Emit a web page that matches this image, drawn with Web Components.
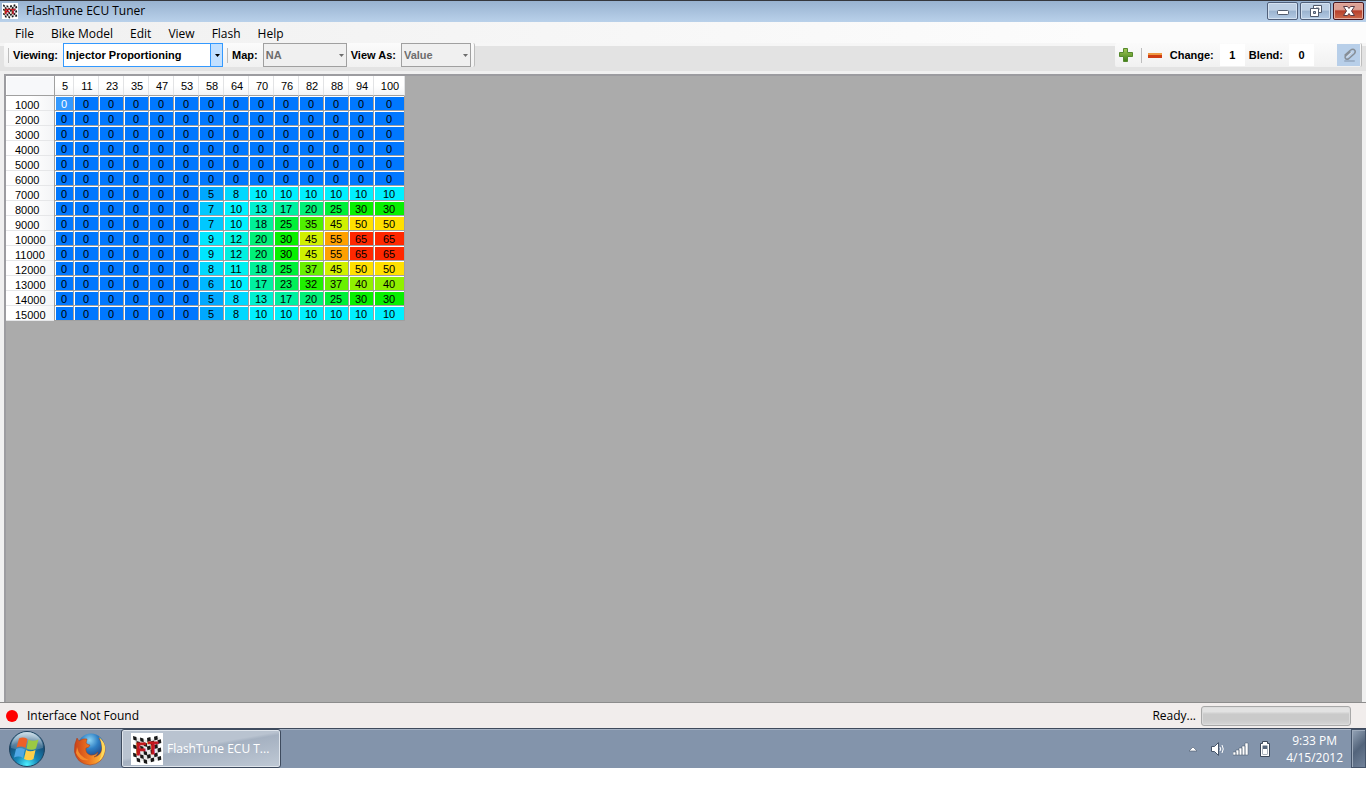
<!DOCTYPE html>
<html lang="en">
<head>
<meta charset="utf-8">
<title>FlashTune ECU Tuner</title>
<style>
  body {
    margin: 0;
    background: #fff;
    color: #000;
    font: 12px/16px "Open Sans", "Noto Sans", sans-serif;
  }
</style>
</head>
<body>
<tuner-desktop>
  <title-bar slot="window">FlashTune ECU Tuner</title-bar>
  <menu-bar slot="window">
    <button>File</button>
    <button>Bike Model</button>
    <button>Edit</button>
    <button>View</button>
    <button>Flash</button>
    <button>Help</button>
  </menu-bar>
  <tool-bar slot="window"></tool-bar>
  <map-view slot="window"><map-table></map-table></map-view>
  <status-bar slot="window">Interface Not Found<span slot="state">Ready...</span></status-bar>
  <task-bar slot="taskbar">FlashTune ECU T...</task-bar>
</tuner-desktop>

<script>
// checkered flags logo, shared by the title bar and the taskbar
function flagLogo(size) {
  let squares = "";
  for (let r = 0; r < 6; r++) {
    for (let c = 0; c < 8; c++) {
      if ((r + c) % 2 === 0) {
        const x = 2 + c * 3.5;
        const y = 3 + r * 4.2 + (c < 4 ? c * 0.7 : (7 - c) * 0.7);
        const k = c < 4 ? 1 : -1;
        squares += `<path d="M${x} ${y}l3.4 ${k}l.4 3.8l-3.4 ${-k}z"/>`;
      }
    }
  }
  return `
    <svg width="${size}" height="${size}" viewBox="0 0 32 32" aria-hidden="true">
      <rect width="32" height="32" fill="#fff"/>
      <path d="M3 4l13 3v22l-9-2zM29 4L16 7v22l10-2z" fill="#e9e9e9"/>
      <g fill="#181818">${squares}</g>
      <g fill="#c4161c" stroke="#c4161c" font-family="Liberation Sans, sans-serif" font-weight="bold" font-size="16">
        <text x="5" y="22">F</text>
        <text x="17" y="21">T</text>
      </g>
    </svg>`;
}

class TunerDesktop extends HTMLElement {
  constructor() {
    super();
    this.attachShadow({ mode: "open" });
    this.shadowRoot.innerHTML = `
      <style>
        :host {
          display: flex;
          flex-direction: column;
          height: 100vh;
          box-sizing: border-box;
          padding-bottom: 32px;
        }
        main {
          flex: 1;
          min-height: 0;
          display: flex;
          flex-direction: column;
          background: #f0f0f0;
        }
      </style>
      <main><slot name="window"></slot></main>
      <slot name="taskbar"></slot>
    `;
  }
}

class TitleBar extends HTMLElement {
  constructor() {
    super();
    this.attachShadow({ mode: "open" });
    this.shadowRoot.innerHTML = `
      <style>
        :host {
          display: flex;
          align-items: center;
          height: 22px;
          box-sizing: border-box;
          border-top: 1px solid #35373d;
          padding: 0 2px 1px;
          background: linear-gradient(#98b2d0, #b9d1ea);
        }
        .name {
          flex: 1;
          margin-left: 8px;
        }
        .buttons {
          display: flex;
          gap: 2px;
        }
        button {
          width: 31px;
          height: 18px;
          padding: 0;
          display: grid;
          place-items: center;
          border: 1px solid #50607a;
          border-radius: 2px;
          background: linear-gradient(#bdcfe3 0 45%, #9ab3cf 50%, #b4cbe4);
          box-shadow: inset 0 0 0 1px #d3e1f0;
        }
        .close {
          border-color: #4a1820;
          background: linear-gradient(#dda195 0 40%, #b8402c 50%, #cc6a4c);
          box-shadow: inset 0 0 0 1px #e4ada0;
        }
      </style>
      ${flagLogo(16)}
      <span class="name"><slot></slot></span>
      <div class="buttons">
        <button aria-label="Minimize">
          <svg width="14" height="12"><rect x="1.500" y="5.500" width="11" height="4" rx="1" fill="#fff" stroke="#515b6c"/></svg>
        </button>
        <button aria-label="Restore">
          <svg width="14" height="12">
            <path d="M4.500.5h8v7h-8z" fill="#fff" stroke="#515b6c"/>
            <path d="M7 3h3v2H7z" fill="#a9bdd5" stroke="#515b6c" stroke-width=".8"/>
            <path d="M1.500 3.500h8v8h-8z" fill="#fff" stroke="#515b6c"/>
            <path d="M4.500 6.500h2v2h-2z" fill="#a9bdd5" stroke="#515b6c"/>
          </svg>
        </button>
        <button class="close" aria-label="Close">
          <svg width="14" height="12">
            <path d="M1.500 1.500h4L7 3.500l1.500-2h4L9.500 6l3 4.500h-4L7 8.500l-1.500 2h-4L4.500 6z" fill="#fff" stroke="#573b45"/>
          </svg>
        </button>
      </div>
    `;
  }
}

class MenuBar extends HTMLElement {
  constructor() {
    super();
    this.attachShadow({ mode: "open" });
    this.shadowRoot.innerHTML = `
      <style>
        :host {
          display: flex;
          height: 21px;
          padding-left: 6px;
          align-items: center;
          background: linear-gradient(90deg, #f0f0f0, #fcfcfc 80%);
        }
        ::slotted(button) {
          border: 0;
          padding: 2px 8px 0 9px;
          background: none;
          color: inherit;
          font: inherit;
        }
      </style>
      <slot></slot>
    `;
  }
}

class ToolBar extends HTMLElement {
  constructor() {
    super();
    this.attachShadow({ mode: "open" });
    this.shadowRoot.innerHTML = `
      <style>
        :host {
          display: flex;
          justify-content: space-between;
          height: 24px;
          padding: 0 4px 4px;
          background: linear-gradient(#f6f6f6 3px, #e3e3e3 3px);
          font: bold 11px/16px "Liberation Sans", sans-serif;
        }
        .strip {
          display: flex;
          align-items: center;
          background: linear-gradient(#fbfbfb, #f1f1f1);
          border-radius: 2px;
          border-right: 1px solid #bdbdbd;
        }
        .left { padding: 0 3px 0 4px; }
        .left label { padding-right: 5px; }
        .right { padding: 0 1px 0 3px; }
        label { padding: 0 6px 0 4px; }
        .sep {
          width: 1px;
          height: 15px;
          background: #bdbdbd;
        }
        .combo { display: grid; }
        .combo > * { grid-area: 1 / 1; }
        select {
          appearance: none;
          height: 24px;
          box-sizing: border-box;
          margin: 0;
          padding: 0 2px;
          border: 1px solid #a0a0a0;
          border-radius: 0;
          background: #f0f0f0;
          color: #6d6d6d;
          font: inherit;
          opacity: 1;
        }
        #viewing {
          width: 160px;
          border-color: #3399ff;
          color: #000;
          background: linear-gradient(90deg, #fff 146px, #3399ff 146px 147px, #c2e0ff 147px);
        }
        #map { width: 84px; }
        #view-as { width: 70px; }
        .combo svg {
          justify-self: end;
          align-self: center;
          margin-right: 3px;
          pointer-events: none;
        }
        .combo + .sep { margin-left: 4px; }
        input {
          width: 25px;
          height: 22px;
          box-sizing: border-box;
          padding: 0;
          border: 0;
          background: #fff;
          font: inherit;
          text-align: center;
        }
        button {
          display: grid;
          place-items: center;
          width: 16px;
          height: 22px;
          padding: 0;
          border: 0;
          background: none;
        }
        button + .sep { margin: 0 5px 0 7px; }
        button + label { padding-left: 7px; }
        .blend {
          width: 23px;
          margin-left: 23px;
          background: #b8cfe9;
        }
      </style>
      <div class="strip left">
        <span class="sep"></span>
        <label for="viewing">Viewing:</label>
        <div class="combo">
          <select id="viewing"><option>Injector Proportioning</option></select>
          <svg width="5" height="3"><path d="M0 0h5L2.500 3z"/></svg>
        </div>
        <span class="sep"></span>
        <label for="map">Map:</label>
        <div class="combo">
          <select id="map" disabled><option>NA</option></select>
          <svg width="5" height="3"><path d="M0 0h5L2.500 3z" fill="#6d6d6d"/></svg>
        </div>
        <label for="view-as">View As:</label>
        <div class="combo">
          <select id="view-as" disabled><option>Value</option></select>
          <svg width="5" height="3"><path d="M0 0h5L2.500 3z" fill="#6d6d6d"/></svg>
        </div>
      </div>
      <div class="strip right">
        <button aria-label="Increase">
          <svg width="16" height="16">
            <defs><linearGradient id="g" x2="0" y2="1"><stop stop-color="#a6c957"/><stop offset="1" stop-color="#3d7e16"/></linearGradient></defs>
            <path d="M5.500 1.500h4v4h5v4h-5v5h-4v-5h-4v-4h4z" fill="url(#g)" stroke="#55892d"/>
          </svg>
        </button>
        <span class="sep"></span>
        <button aria-label="Decrease">
          <svg width="16" height="16">
            <rect x="1" y="6" width="14" height="5" fill="#cf3d12"/>
            <rect x="1" y="6" width="14" height="2" fill="#ee9a43"/>
          </svg>
        </button>
        <label for="change">Change:</label>
        <input id="change" value="1">
        <label for="blend">Blend:</label>
        <input id="blend" value="0">
        <button class="blend" aria-label="Blend cells">
          <svg width="16" height="16" fill="none" stroke-linecap="round">
            <path d="M4 14h9" stroke="#9db1c9" stroke-width="2"/>
            <path d="M4 8l5-4.500q3-2 4.500-.5t0 3.500L8 11.500q-2.500 1.500-3.500 0t0-2.500l4.500-4" stroke="#878e96" stroke-width="1.500"/>
            <path d="M6 10l5-5" stroke="#dcdfe2"/>
          </svg>
        </button>
      </div>
    `;
  }
}

class MapView extends HTMLElement {
  constructor() {
    super();
    this.attachShadow({ mode: "open" });
    this.shadowRoot.innerHTML = `
      <style>
        :host {
          display: block;
          flex: 1;
          min-height: 0;
          overflow: hidden;
          margin: 3px 4px 0;
          border: solid #9c9ca0;
          border-width: 2px 0 0 2px;
          background: #ababab;
        }
      </style>
      <slot></slot>
    `;
  }
}

const LOADS = [5, 11, 23, 35, 47, 53, 58, 64, 70, 76, 82, 88, 94, 100];

// injector split per RPM row, only the columns from load 58 up differ from zero
const ROWS = {
  1000: [], 2000: [], 3000: [], 4000: [], 5000: [], 6000: [],
  7000: [5, 8, 10, 10, 10, 10, 10, 10],
  8000: [7, 10, 13, 17, 20, 25, 30, 30],
  9000: [7, 10, 18, 25, 35, 45, 50, 50],
  10000: [9, 12, 20, 30, 45, 55, 65, 65],
  11000: [9, 12, 20, 30, 45, 55, 65, 65],
  12000: [8, 11, 18, 25, 37, 45, 50, 50],
  13000: [6, 10, 17, 23, 32, 37, 40, 40],
  14000: [5, 8, 13, 17, 20, 25, 30, 30],
  15000: [5, 8, 10, 10, 10, 10, 10, 10]
};

const HEAT = {
  0: "#0078ff", 5: "#00a8ff", 6: "#00b8ff", 7: "#00c8ff", 8: "#00d8ff",
  9: "#00e6ff", 10: "#00f0ff", 11: "#00f0f0", 12: "#00f0e0", 13: "#00f0d0",
  17: "#00f0a0", 18: "#00f098", 20: "#00f078", 23: "#00f058", 25: "#00f038",
  30: "#08f000", 32: "#20f000", 35: "#50f000", 37: "#68f000", 40: "#90f000",
  45: "#d0f000", 50: "#ffe000", 55: "#ffa000", 65: "#ff2800"
};

class MapTable extends HTMLElement {
  constructor() {
    super();
    this.attachShadow({ mode: "open" });
  }

  connectedCallback() {
    this.render();
  }

  render() {
    const cols = LOADS.map((load) => `<col style="width: ${load === 5 ? 19 : load === 100 ? 31 : 25}px">`).join("");
    const head = LOADS.map((load) => `<th scope="col">${load}</th>`).join("");
    const body = Object.entries(ROWS).map(([rpm, split]) => {
      const values = split.length ? [0, 0, 0, 0, 0, 0, ...split] : LOADS.map(() => 0);
      const cells = values.map((v, i) => {
        const selected = rpm === "1000" && i === 0;
        return `<td${selected ? ' class="selected"' : ""} style="background-color: ${selected ? "#3399ff" : HEAT[v]}">${v}</td>`;
      }).join("");
      return `<tr><th scope="row">${rpm}</th>${cells}</tr>`;
    }).join("");

    this.shadowRoot.innerHTML = `
      <style>
        :host { display: block; }
        table {
          table-layout: fixed;
          width: 399px;
          border-collapse: separate;
          border-spacing: 0;
          font: 11px/12px "Liberation Sans", sans-serif;
        }
        th, td {
          box-sizing: border-box;
          padding: 0;
          text-align: center;
          font-weight: normal;
        }
        td {
          height: 15px;
          padding-top: 2px;
          border-right: 1px solid #a0a0a0;
          border-bottom: 1px solid #a0a0a0;
          box-shadow: inset 1px 1px #fff;
        }
        .selected { color: #fff; }
        thead th {
          height: 20px;
          padding-left: 2px;
          border-right: 1px solid #e2e3e5;
          border-bottom: 1px solid #a0a0a0;
          background: linear-gradient(#fff 50%, #f3f4f6);
        }
        thead td {
          height: 20px;
          background: #f7f8fa;
        }
        tbody th {
          height: 15px;
          padding: 3px 0 0 9px;
          border-right: 1px solid #a0a0a0;
          box-shadow: inset 0 -1px #e6e7e9;
          background: linear-gradient(90deg, #fff 50%, #f3f4f6);
          text-align: left;
        }
      </style>
      <table>
        <colgroup><col style="width: 49px">${cols}</colgroup>
        <thead><tr><td></td>${head}</tr></thead>
        <tbody>${body}</tbody>
      </table>
    `;
  }
}

class StatusBar extends HTMLElement {
  constructor() {
    super();
    this.attachShadow({ mode: "open" });
    this.shadowRoot.innerHTML = `
      <style>
        :host {
          display: flex;
          align-items: center;
          height: 26px;
          box-sizing: border-box;
          padding: 0 15px 0 6px;
          border-top: 1px solid #8c8c8c;
          background: #f1edec;
        }
        .dot {
          width: 12px;
          height: 12px;
          margin-right: 9px;
          border-radius: 50%;
          background: #f00;
        }
        .text { flex: 1; }
        .progress {
          width: 150px;
          height: 20px;
          box-sizing: border-box;
          margin-left: 5px;
          border: 1px solid #a8a8a8;
          border-radius: 3px;
          background: linear-gradient(#e2e2e2 0 25%, #cacaca 40% 70%, #d6d6d6);
          box-shadow: inset 0 0 0 1px #dcdcdc;
        }
      </style>
      <span class="dot"></span>
      <span class="text"><slot></slot></span>
      <slot name="state"></slot>
      <div class="progress" role="progressbar" aria-label="Progress" aria-valuenow="0"></div>
    `;
  }
}

class TaskBar extends HTMLElement {
  constructor() {
    super();
    this.attachShadow({ mode: "open" });
    this.shadowRoot.innerHTML = `
      <style>
        :host {
          display: flex;
          align-items: center;
          height: 40px;
          box-sizing: border-box;
          border-top: 1px solid #3f4a5c;
          background: #8394ab;
          box-shadow: inset 0 1px #a5b2c4;
          color: #fff;
        }
        button {
          display: flex;
          align-items: center;
          padding: 0;
          border: 0;
          background: none;
          color: inherit;
          font: inherit;
        }
        .start { margin-left: 8px; }
        .firefox { margin: 0 14px 0 27px; }
        .task {
          width: 160px;
          height: 39px;
          box-sizing: border-box;
          padding-left: 9px;
          gap: 4px;
          border: 1px solid #3e4b5e;
          border-radius: 3px;
          background: linear-gradient(170deg, #b9c3d0 0 45%, #a5b1c1 50%, #bfc9d5);
          box-shadow: inset 0 0 0 1px #dfe5ec;
          white-space: nowrap;
        }
        .tray {
          margin-left: auto;
          display: flex;
          align-items: center;
          gap: 8px;
        }
        .clock {
          margin-left: 5px;
          text-align: center;
          line-height: 17px;
        }
        .show {
          width: 15px;
          height: 39px;
          border: 1px solid #45546a;
          background: linear-gradient(135deg, #96a5b8, #53647b 50%, #71829a);
          box-shadow: inset 1px 1px #9eabbc;
        }
      </style>
      <button class="start" aria-label="Start">
        <svg width="38" height="38" viewBox="0 0 38 38">
          <defs>
            <radialGradient id="orb" cx=".5" cy=".95" r=".9"><stop stop-color="#4df0ff"/><stop offset=".35" stop-color="#1687b8"/><stop offset=".75" stop-color="#164e78"/><stop offset="1" stop-color="#6b9bb9"/></radialGradient>
            <linearGradient id="shine" x2="0" y2="1"><stop stop-color="#fff" stop-opacity=".65"/><stop offset="1" stop-color="#fff" stop-opacity=".12"/></linearGradient>
          </defs>
          <circle cx="19" cy="19" r="17.500" fill="url(#orb)" stroke="#1e425e"/>
          <path d="M3 18a16 16 0 0 1 32 0q-16 5-32 0z" fill="url(#shine)"/>
          <path d="M11 8.500q4-2 8.500.5l-2 9q-4-2.500-9-.5z" fill="#ed6028"/>
          <path d="M20.500 9.500q4 2.500 10 0l-2.500 9q-4 2.500-9.500 0z" fill="#9bc943"/>
          <path d="M8 19q4-2 9 .5l-2 8.500q-4-2.500-9-.5z" fill="#4fa7e5"/>
          <path d="M18 20q4 2.500 9.500 0l-2 9q-4 2.500-9.500 0z" fill="#ffd04a"/>
        </svg>
      </button>
      <button class="firefox" aria-label="Firefox">
        <svg width="34" height="34" viewBox="0 0 34 34">
          <defs>
            <radialGradient id="globe" cx=".45" cy=".25" r=".8"><stop stop-color="#8cd4f4"/><stop offset=".4" stop-color="#2f7fc4"/><stop offset="1" stop-color="#162c68"/></radialGradient>
            <linearGradient id="fox" x2="1" y2="0"><stop stop-color="#c8401a"/><stop offset=".5" stop-color="#ef7820"/><stop offset="1" stop-color="#ffd045"/></linearGradient>
          </defs>
          <circle cx="18" cy="15" r="13.500" fill="url(#globe)"/>
          <path d="M4 6l2 3q4-3 8-2l-1 4q2 2 4 2-1 3-4 3-1 5 4 7 5 1 8-3-1 4-4 5 7-1 8-9 0-6-3-10 7 5 6 13-2 13-15 14Q4 32 1.500 20 1 12 4 6z" fill="url(#fox)" stroke="#a63c16" stroke-width=".5"/>
          <path d="M26 5q7 6 6 13-1 7-6 11 3-5 3-11 0-8-3-13z" fill="#ffd95a"/>
          <path d="M4 15q2 10 12 13-9 2-13-7z" fill="#f58b2c"/>
        </svg>
      </button>
      <button class="task">${flagLogo(32)}<slot></slot></button>
      <div class="tray">
        <svg width="16" height="16"><path d="M4 10l4-4 4 4z" fill="#fff" stroke="#4a586c" stroke-width=".6"/></svg>
        <svg width="16" height="16" fill="none">
          <path d="M2.500 5.500h3l4-4v13l-4-4h-3z" fill="#fff" stroke="#46556a"/>
          <path d="M11 6q1.500 2 0 4M13 4q2.500 4 0 8" stroke="#fff"/>
        </svg>
        <svg width="16" height="16" fill="#fff" stroke="#46556a" stroke-width=".5">
          <path d="M0 11h3v3H0zM3 9h3v5H3zM6 7h3v7H6zM9 5h3v9H9zM12 2h3v12h-3z"/>
        </svg>
        <svg width="16" height="16">
          <path d="M5.500 2.500V.5h5v2h2v13h-9v-13z" fill="#fff" stroke="#3b4759"/>
          <path d="M5.500 4.500h5v9h-5z" fill="#56667b"/>
          <path d="M6 8h4v5H6z" fill="#fff"/>
        </svg>
        <div class="clock"><div>9:33 PM</div><div>4/15/2012</div></div>
        <button class="show" aria-label="Show desktop"></button>
      </div>
    `;
  }
}

customElements.define("tuner-desktop", TunerDesktop);
customElements.define("title-bar", TitleBar);
customElements.define("menu-bar", MenuBar);
customElements.define("tool-bar", ToolBar);
customElements.define("map-view", MapView);
customElements.define("map-table", MapTable);
customElements.define("status-bar", StatusBar);
customElements.define("task-bar", TaskBar);
</script>
</body>
</html>
